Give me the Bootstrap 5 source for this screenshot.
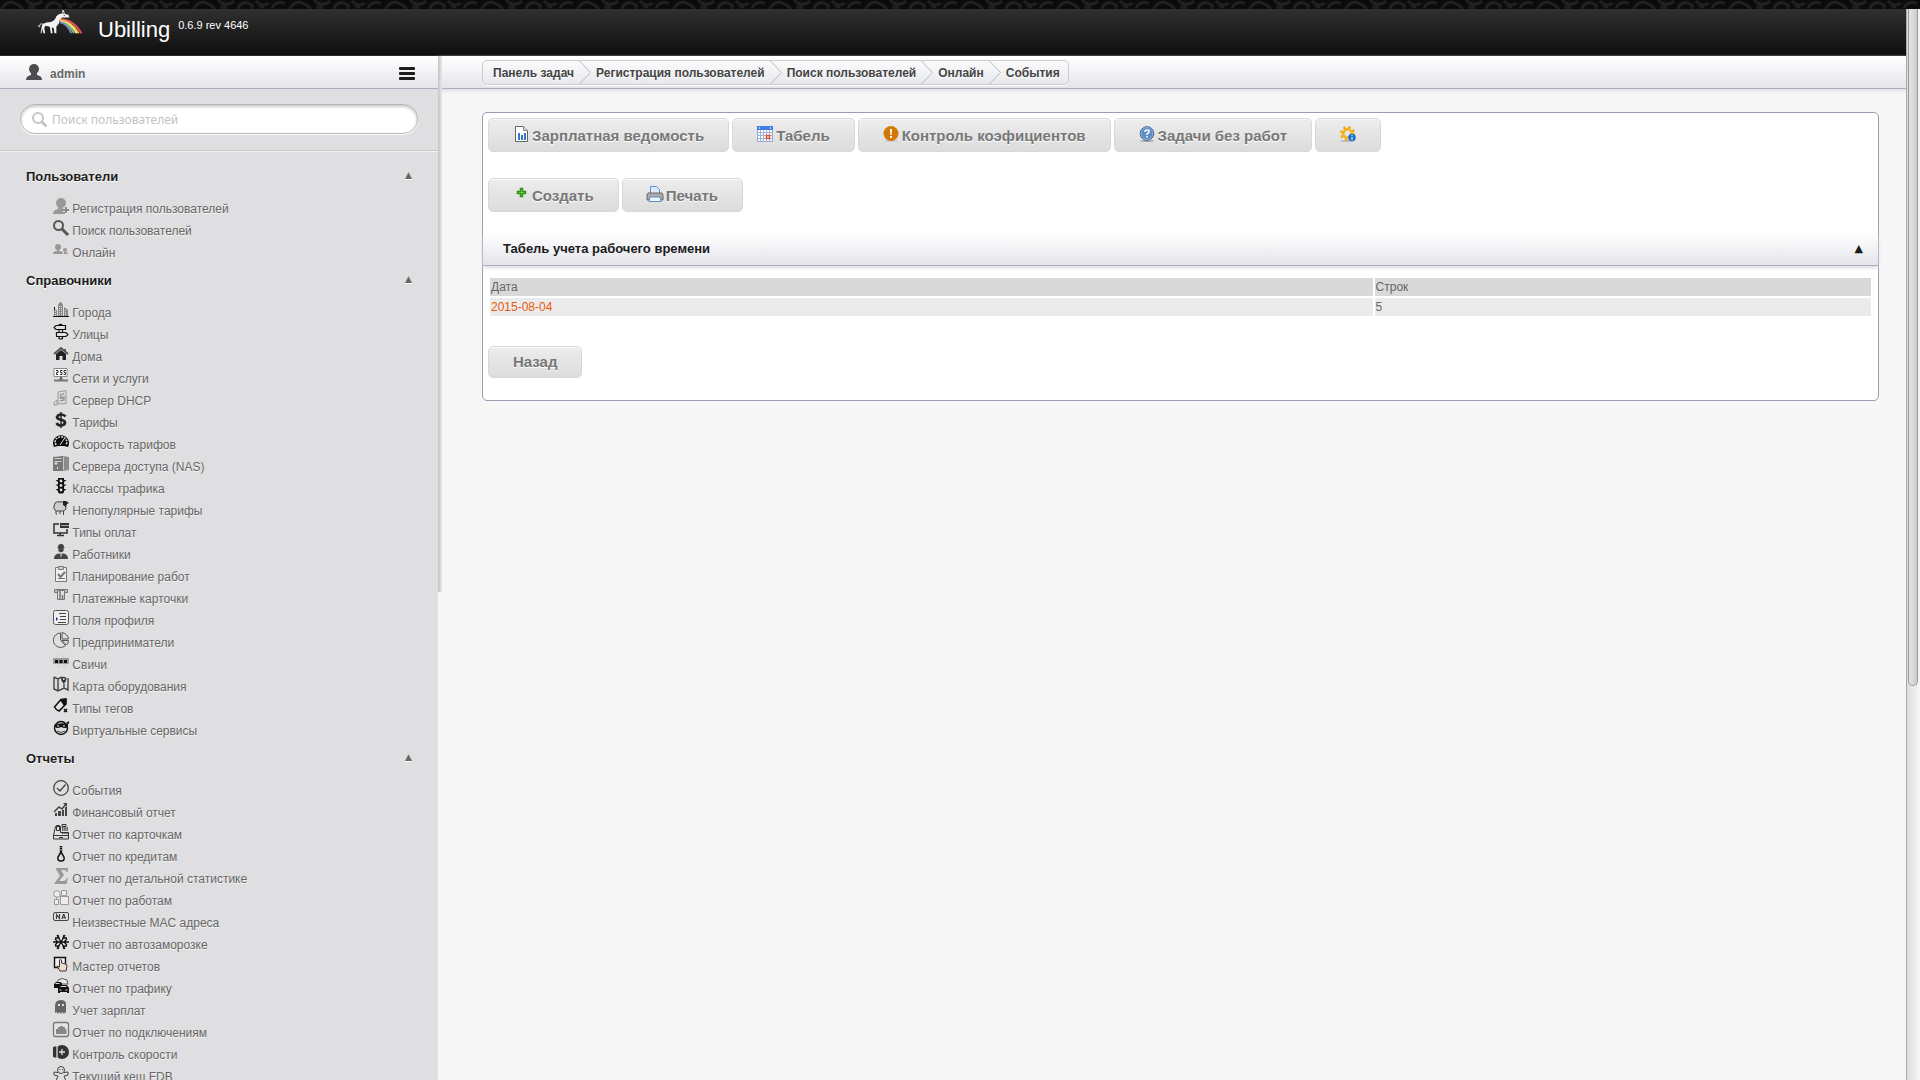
<!DOCTYPE html>
<html lang="ru">
<head>
<meta charset="utf-8">
<meta name="viewport" content="width=device-width, initial-scale=1">
<title>Ubilling</title>
<link href="https://cdn.jsdelivr.net/npm/bootstrap@5.3.0/dist/css/bootstrap.min.css" rel="stylesheet">
<style>
body{font-family:"Liberation Sans",Arial,sans-serif;font-size:12px;line-height:16px;color:#666;background:#f7f7f7}
a{text-decoration:none}
.shell{height:100vh;overflow:hidden}
.shell-body{min-height:0}
.damask{height:9px;background:#0b0b0b;flex:none}
.damask svg{display:block;width:100%;height:9px}
.brandbar{height:47px;background:linear-gradient(#303030,#0e0e0e);border-bottom:1px solid #2c2828;padding:1px 0 0 36px;flex:none}
.brandbar .unicorn{width:50px;height:26px}
.brandname{color:#fff;font-size:22px;line-height:24px}
.ver{color:#fff;font-size:11px;line-height:14px}
.strip{height:33px;background:linear-gradient(#fff,#e4e5eb);border-bottom:1px solid #a9adbd}
.side{width:438px;flex:none;background:#dfdfe1;position:relative;z-index:2}
.side-edge{position:absolute;left:438px;top:0;width:4px;height:536px;background:linear-gradient(90deg,#c2c2c4,#e9e9ea)}
.side-user{padding:3px 23px 0 26px}
.side-user a{font-size:12px;font-weight:bold;color:#666;text-shadow:0 1px 0 #fff}
.menu-btn{border:0;background:none;padding:0;width:16px;height:14px}
.menu-btn svg{display:block}
.finder{padding:15px 20px 16px;border-bottom:1px solid #c8c8ca;box-shadow:0 1px 0 #f2f2f3}
.finder-box{height:30px;border:1px solid #b4b4b6;border-radius:15px;background:#fff;box-shadow:inset 0 2px 3px #ccc,0 1px 0 #fff;padding:0 10px}
.finder-box input{border:0;outline:0;background:none;padding:0;margin-left:5px;font:12px "Noto Sans",sans-serif}
.finder-box input::placeholder{color:#c3c3c3;opacity:1}
.navgroup{padding:9px 26px 0}
.navgroup:first-child{padding-top:18px}
.navgroup h2{font-size:13px;line-height:16px;font-weight:bold;color:#1c1c1c;margin:0;text-shadow:0 1px 0 #fff}
.navgroup h2 + ul{padding:13px 0 0 27px}
.tri{font-size:9px;line-height:12px;color:#666;font-family:"DejaVu Sans",sans-serif}
.navgroup li{height:22px;line-height:22px;white-space:nowrap}
.navgroup li a{color:#666;text-shadow:0 1px 0 #f4f4f4}
.ic{width:16px;height:16px;vertical-align:-1px;overflow:visible}
.stage{min-width:0}
.stage > .strip{padding:4px 0 0 44px;box-shadow:0 2px 4px #dcdce2}
.trail{height:25px;width:max-content;border:1px solid #ccc;border-radius:5px;box-shadow:0 1px 0 #fff;padding:0 8px 0 10px}
.trail a{color:#444;font-weight:bold;text-shadow:0 1px 0 #fff}
.trail svg{width:12px;height:23px;margin:0 5px}
.panel{margin:23px 27px 0 44px;background:#fff;border:1px solid #989db0;border-radius:5px;padding:5px 0 22px}
.tools{padding:0 5px;gap:3px}
.tools-next{margin-top:26px}
.wbtn{height:34px;border:1px solid #d8d8d8;border-radius:5px;background:linear-gradient(#ededed,#dcdcdc);box-shadow:inset 0 1px 0 #fafafa;color:#777;font-size:15px;line-height:20px;font-weight:bold;padding:2px 24px 0;text-shadow:0 1px 0 #fff;white-space:nowrap}
.wbtn:hover{color:#555}
.wbtn .ic{margin-right:3px}
.wbtn.solo .ic{margin:0}
.wbtn.low{height:32px;padding-top:0}
.section-head{height:33px;margin-top:21px;padding:0 15px 0 20px;background:linear-gradient(#fff,#e4e5eb);border-bottom:1px solid #a9adbd;box-shadow:0 2px 4px #dcdce2}
.section-head h1{font-size:13px;line-height:16px;font-weight:bold;color:#1c1c1c;margin:0}
.section-head .tri{color:#1c1c1c;font-size:11px}
.sheet{width:calc(100% - 10px);margin:10px 5px 28px;border-collapse:separate;border-spacing:2px}
.sheet th,.sheet td{height:18px;line-height:16px;padding:1px;font-weight:normal}
.sheet th{background:#d9d9d9}
.sheet td{background:#ebebeb}
.sheet .date-col{width:64%}
.sheet a{color:#e8590c}
.rail{width:14px;flex:none;border-left:1px solid #aaa;background:linear-gradient(90deg,#ddd,#f6f6f6);padding:0 2px 0 1px}
.rail-thumb{height:677px;border:1px solid #999;border-top:0;border-radius:0 0 5px 5px;background:linear-gradient(90deg,#e4e4e4,#ccc)}
</style>
<script src="https://cdn.jsdelivr.net/npm/bootstrap@5.3.0/dist/js/bootstrap.bundle.min.js"></script>
</head>
<body>
<div class="shell d-flex flex-column">
<div class="damask"><svg aria-hidden="true"><defs><pattern id="dm" width="96" height="9" patternUnits="userSpaceOnUse"><g fill="none" stroke="#202020" stroke-width="3"><path d="M2 9Q6 0 14 3T22 9M26 0Q34 8 42 1M46 9q2-7 9-6t5 6M64 1q6 7 13 2M80 8q3-7 13-5"/><circle cx="32" cy="6" r="2"/><circle cx="70" cy="6" r="1"/></g></pattern></defs><rect width="100%" height="9" fill="url(#dm)"/></svg></div>
<div class="d-flex flex-fill shell-body">
<div class="d-flex flex-column flex-fill stage">
<header class="brandbar d-flex align-items-start">
<svg class="unicorn" viewBox="0 0 50 28" aria-hidden="true"><g fill="none" stroke-width="2"><path d="M24 10Q38 10 47 25" stroke="#e8505a"/><path d="M24 11Q36 12 44 25" stroke="#f3b24f"/><path d="M24 12Q35 13 42 25" stroke="#f4ec78"/><path d="M24 13Q34 14 39 25" stroke="#78c47a"/><path d="M24 13Q32 15 36 25" stroke="#8a7fd0"/></g><path d="M5 15q4-2 9-2 4-1 6-6 3-4 8-3l5 1 1 3-4 0-4 0q-3 2-3 6l-3 4 0 7h-2l-1-6-2 0 1 6h-2l-1-7-5-1-1 3 1 5H6l-1-5-1 5H3l1-6z" fill="#f2f2f2"/><path d="M27 4l0-4 2 4M5 15q-3-1-3 3l-2-1M21 8q-2-1 1-2t3-2" stroke="#eee" stroke-width="1" fill="none"/><path d="M28 6h1" stroke="#222"/></svg>
<div class="d-flex pt-1 ms-2"><span class="brandname pt-1 ms-1">Ubilling</span><span class="ver ms-1 ps-1 pt-1">0.6.9 rev 4646</span></div>
</header>
<div class="d-flex flex-fill shell-body">
<aside class="side">
<div class="side-edge"></div>
<div class="strip side-user d-flex align-items-center justify-content-between">
<a href="#" class="d-flex align-items-center"><svg width="16" height="16" viewBox="0 0 16 16" fill="#4d4d4d" class="me-2 mb-1" aria-hidden="true"><circle cx="8" cy="5" r="5"/><path d="M5 8h6v3q5 1 5 5H0q0-4 5-5z"/></svg>admin</a>
<button class="menu-btn" type="button" aria-label="Меню"><svg width="16" height="14" fill="#1d1d1d"><rect width="16" height="3" rx="1"/><rect y="5" width="16" height="3" rx="1"/><rect y="10" width="16" height="3" rx="1"/></svg></button>
</div>
<form class="finder"><div class="finder-box d-flex align-items-center"><svg width="16" height="16" fill="none" stroke="#c4c4c4" stroke-width="2" aria-hidden="true"><circle cx="7" cy="7" r="5"/><path d="M10.500 10.500l5 5" stroke-width="3"/></svg><input class="flex-fill" type="text" placeholder="Поиск пользователей" aria-label="Поиск пользователей"></div></form>
<nav>
<section class="navgroup">
<h2 class="d-flex justify-content-between">Пользователи<span class="tri">▲</span></h2>
<ul class="list-unstyled mb-0">
<li><a href="#"><svg class="ic" viewBox="0 0 16 16" fill="#999"><circle cx="8" cy="5" r="5"/><path d="M5 8h5v3h2q2 2 2 5H0q0-4 5-5z"/><path d="M10 11h2V9h3v2h1v3h-1v2h-3v-2h-2z" fill="#eee"/><path d="M13 9v6M10 12h6" stroke="#888" stroke-width="2"/></svg> Регистрация пользователей</a></li>
<li><a href="#"><svg class="ic" viewBox="0 0 16 16" fill="none" stroke="#555"><circle cx="5.500" cy="5.500" r="4.500" stroke-width="2"/><path d="M9 9l6 6" stroke-width="3"/></svg> Поиск пользователей</a></li>
<li><a href="#"><svg class="ic" viewBox="0 0 16 16" fill="#999"><circle cx="5" cy="5" r="3"/><path d="M4 7h2v2q4 0 4 3H0q0-3 4-3z"/><circle cx="12" cy="8" r="2"/><path d="M11 12q-1-2 1-2 3 0 3 2z"/></svg> Онлайн</a></li>
</ul></section>
<section class="navgroup">
<h2 class="d-flex justify-content-between">Справочники<span class="tri">▲</span></h2>
<ul class="list-unstyled mb-0">
<li><a href="#"><svg class="ic" viewBox="0 0 16 16"><path d="M1 14V8h3v6M5 14V3l2-3h1l2 3v11M11 14V5l4 3v6" fill="#888"/><path d="M6.500 4v10M8.500 4v10M2.500 9v5M12.500 8v6" stroke="#ddd" stroke-dasharray="1 1"/><path d="M0 14.500h16M1.500 5v3" stroke="#111"/></svg> Города</a></li>
<li><a href="#"><svg class="ic" viewBox="0 0 16 16" fill="none" stroke="#111"><path d="M3 1.500h9.500v4H3l-2-2zM3.500 8.500H13l2 2-2 2H3.500zM5.500 1.500q2-2 4 0M6 5.500v3M9.500 5.500v3M6 12.500v2q2 1 3.500 0v-2" stroke-width="1.200"/></svg> Улицы</a></li>
<li><a href="#"><svg class="ic" viewBox="0 0 16 16"><path d="M1 8l7-6 7 6M12 3v3" fill="none" stroke="#555" stroke-width="2"/><path d="M3 8l5-4 5 4v6h-3.500v-4h-3v4H3z" fill="#222"/></svg> Дома</a></li>
<li><a href="#"><svg class="ic" viewBox="0 0 16 16"><path d="M1 .5h13v8H1z" fill="#fff" stroke="#888"/><path d="M3 2.500h2v2H3.500v2H5M9.500 2.500h-2v2H9v2H7M13 2.500h-2v2h1.500v2h-2" fill="none" stroke="#333"/><path d="M8 9v3" stroke="#555" stroke-width="2"/><path d="M1 12.500h14M6 11.500h4" stroke="#777" stroke-width="2"/></svg> Сети и услуги</a></li>
<li><a href="#"><svg class="ic" viewBox="0 0 16 16" fill="#ddd" stroke="#999"><path d="M5 2l8-1.500v13L5 14z"/><path d="M11 3.500L7.500 5v3L11 7v3l-4 1" fill="none" stroke-width="1.500"/><path d="M1 15q-1-3 3-5v5z"/></svg> Сервер DHCP</a></li>
<li><a href="#"><svg class="ic" viewBox="0 0 16 16" fill="none" stroke="#2b2424"><path d="M12.500 4.500Q11 2.500 8 2.500t-4 2.500q0 2 4 2.800t4 3-4 2.700q-3 0-4.500-2.500" stroke-width="2.700"/><path d="M8 0v16" stroke-width="1.500"/></svg> Тарифы</a></li>
<li><a href="#"><svg class="ic" viewBox="0 0 16 16"><path d="M1 13a8 8 0 1 1 14 0l-4-1H5z" fill="#0a0a0a"/><path d="M3 11l-1-3 1-3 3-2 4 0 3 2 1 3-1 3" fill="none" stroke="#ddd" stroke-width="1.500" stroke-dasharray="2 1"/><path d="M7 11l4-6" stroke="#ddd"/></svg> Скорость тарифов</a></li>
<li><a href="#"><svg class="ic" viewBox="0 0 16 16"><path d="M0 1l10-1v15L0 15z" fill="#777"/><path d="M10 0l6 1v13l-6 1z" fill="#8c8c8c"/><path d="M1.500 2.500h7M1.500 5.500h7M10.500 1v13" stroke="#ccc"/><path d="M1.500 7.500h3M4 12h1" stroke="#ddd" stroke-width="2"/></svg> Сервера доступа (NAS)</a></li>
<li><a href="#"><svg class="ic" viewBox="0 0 16 16"><path d="M5 0h6v14l-1 1.500H6L5 14z" fill="#111"/><path d="M2.500 2H5v2zM2.500 6.500H5v2zM2.500 11H5v2zM13.500 2H11v2zM13.500 6.500H11v2zM13.500 11H11v2z" fill="#111"/><circle cx="8" cy="3" r="1.400" fill="#ddd"/><circle cx="8" cy="7.500" r="1.400" fill="#ddd"/><circle cx="8" cy="12" r="1.400" fill="#ddd"/></svg> Классы трафика</a></li>
<li><a href="#"><svg class="ic" viewBox="0 0 16 16"><path d="M2 3q2-2 5-1 3-1 5 1l1 6-2 2H3Q0 9 1 6z" fill="#ccc" stroke="#444"/><path d="M3 11v3h1M7 11v3M10.500 11v4" stroke="#444" fill="none"/><path d="M10 1l3 0 3 2-2 1-1 3-3-2z" fill="#222"/></svg> Непопулярные тарифы</a></li>
<li><a href="#"><svg class="ic" viewBox="0 0 16 16"><path d="M6 2H1v9h13V7" fill="none" stroke="#333" stroke-width="1.500"/><path d="M7 1h9v5H7z" fill="#333"/><path d="M8 3.500h8" stroke="#aaa"/><path d="M7 11v2M4 13.500h7" stroke="#333" stroke-width="1.500"/></svg> Типы оплат</a></li>
<li><a href="#"><svg class="ic" viewBox="0 0 16 16" fill="#444"><path d="M5 3q0-3 3-3t3 3l1 1H4z"/><circle cx="8" cy="5.500" r="2.700"/><path d="M1 15q0-5 5-5.500h4q5 .5 5 5.500z"/><path d="M7 9.500h2L8 14z" fill="#ccc"/></svg> Работники</a></li>
<li><a href="#"><svg class="ic" viewBox="0 0 16 16" fill="#eee" stroke="#777"><path d="M2.500 1.500h11v14h-11z"/><path d="M5.500.5h5v3h-5z" fill="#ccc"/><path d="M5 8l2.500 3L12 6" fill="none" stroke-width="2"/><path d="M5 12.500h7" stroke-width="1"/></svg> Планирование работ</a></li>
<li><a href="#"><svg class="ic" viewBox="0 0 16 16"><path d="M1.500 1.500h13v3h-13z" fill="#bbb" stroke="#777"/><path d="M4.500 2.500h7v9h-7z" fill="#ddd" stroke="#777"/><path d="M7 3v8M9.500 7v4" stroke="#777" stroke-width="1.500"/></svg> Платежные карточки</a></li>
<li><a href="#"><svg class="ic" viewBox="0 0 16 16"><rect x=".5" y=".5" width="15" height="14" rx="2" fill="#eee" stroke="#555"/><path d="M6 3.500h7M7 6.500h6M7 9.500h6M5 12.500h8" stroke="#444"/><path d="M3 7v4l2-2z" fill="#22a"/></svg> Поля профиля</a></li>
<li><a href="#"><svg class="ic" viewBox="0 0 16 16" fill="none" stroke="#555"><path d="M7.500 1a7.200 7.200 0 1 0 5 12.500L7.500 8z"/><path d="M9 .5V7h6.500Q15 2 9 .5zM9 8.500h6.500q0 3-2 4.500z"/></svg> Предприниматели</a></li>
<li><a href="#"><svg class="ic" viewBox="0 0 16 16"><path d="M3 3l3-2M9 3l3-2M4 13l3-2M10 13l3-2" stroke="#ccc"/><rect y="4" width="16" height="6" rx="1" fill="#999"/><path d="M2 6h3v3H2zM6.500 6h3v3h-3zM11 6h3v3h-3z" fill="#111"/></svg> Свичи</a></li>
<li><a href="#"><svg class="ic" viewBox="0 0 16 16"><path d="M.8 1L5 3l4-2M15 2v12l-4-2-6 3-4-2V1M5 3v11M11 8v4" fill="none" stroke="#444" stroke-width="1.400"/><path d="M8 3a2.800 2.800 0 0 1 5.500 0q0 2-2.700 5Q8 5 8 3z" fill="#333"/><circle cx="10.800" cy="3" r="1" fill="#ddd"/></svg> Карта оборудования</a></li>
<li><a href="#"><svg class="ic" viewBox="0 0 16 16"><path d="M1.500 9L8 1.500l5-.5v5L6 13q-3-1-4.500-4z" fill="#e4e4e6" stroke="#111" stroke-width="1.600"/><path d="M7 2l6-1v5l-2 2z" fill="#111"/><path d="M11 11l3 3M14 11l-3 3" stroke="#111" stroke-width="1.500"/></svg> Типы тегов</a></li>
<li><a href="#"><svg class="ic" viewBox="0 0 16 16"><circle cx="8" cy="8" r="6.500" fill="#ddd" stroke="#111" stroke-width="1.400"/><path d="M1 5q7-3 14-1v3q-3 2-7 0-4 2-6 0zM13 3l3-2v3z" fill="#111"/><path d="M4 6h2M10 6h2" stroke="#eee"/><path d="M4 11q4 3 8 0" fill="none" stroke="#444"/></svg> Виртуальные сервисы</a></li>
</ul></section>
<section class="navgroup">
<h2 class="d-flex justify-content-between">Отчеты<span class="tri">▲</span></h2>
<ul class="list-unstyled mb-0">
<li><a href="#"><svg class="ic" viewBox="0 0 16 16" fill="none" stroke="#444"><circle cx="8" cy="8" r="7.300" stroke-width="1.300"/><path d="M4 8l3 3 5.500-6.500" stroke-width="1.300"/></svg> События</a></li>
<li><a href="#"><svg class="ic" viewBox="0 0 16 16"><path d="M2 11h2v3H2zM5 9h3v5H5zM9 8h2v6H9zM12 5h2v9h-2z" fill="#444"/><path d="M1 10l5-5 3 2 4-5" fill="none" stroke="#444" stroke-width="1.500"/><path d="M10 1h4v4z" fill="#444"/></svg> Финансовый отчет</a></li>
<li><a href="#"><svg class="ic" viewBox="0 0 16 16" fill="none" stroke="#333"><path d="M.5 11.500v3.500h15v-3.500zM.5 11.500l2-9h5v6h8v3M3.500 1.500h3v5h-3zM9 .5h4v2H9zM6 13.500h4"/><path d="M9 4h6M9 6h6M9 9h6" stroke-width="1.500" stroke-dasharray="1.500 .7"/></svg> Отчет по карточкам</a></li>
<li><a href="#"><svg class="ic" viewBox="0 0 16 16" fill="none" stroke="#111"><path d="M8 0v6" stroke-width="2.500" stroke-dasharray="1.500 .6"/><path d="M8 6l-3 5q-1 4 3 4t3-4z" stroke-width="1.500"/></svg> Отчет по кредитам</a></li>
<li><a href="#"><svg class="ic" viewBox="0 0 16 16" fill="#999"><path d="M3 0h12l-.5 4h-1Q13 2 11 2H8l3 5-5 6h4q3 0 4-3h1l-1.500 6H1.500v-1L7 8 3 1z"/></svg> Отчет по детальной статистике</a></li>
<li><a href="#"><svg class="ic" viewBox="0 0 16 16" fill="#eee" stroke="#999"><circle cx="4" cy="4" r="3.300"/><path d="M8.500.5h5v5h-5zM7.500 6.500h8v8h-8zM1.500 9.500h4v5h-4zM3.500 7v2"/></svg> Отчет по работам</a></li>
<li><a href="#"><svg class="ic" viewBox="0 0 16 16" fill="none" stroke="#444"><rect x=".5" y=".5" width="15" height="8" rx="1.500"/><path d="M3.500 7V2.500L6.500 6.500V2M9 7l1.500-4.500h.500L12.500 7M9.500 5.500h3" stroke-width="1.200"/></svg> Неизвестные MAC адреса</a></li>
<li><a href="#"><svg class="ic" viewBox="0 0 16 16" fill="none" stroke="#111" stroke-width="1.300"><path d="M0 8h16M4 1l8 14M12 1L4 15M2 5l3 3-3 3M14 5l-3 3 3 3M5 1l1 3-4 0M11 1l-1 3 4 0M5 15l1-3-4 0M11 15l-1-3 4 0"/></svg> Отчет по автозаморозке</a></li>
<li><a href="#"><svg class="ic" viewBox="0 0 16 16"><path d="M1.500 1.500h11v10h-11z" fill="#eee" stroke="#111" stroke-width="1.400"/><path d="M6.500 4q1-1 2 0v3l4.500 1 1 2-1 5H7l-3-5 2.500 1z" fill="#ebdccb" stroke="#433"/></svg> Мастер отчетов</a></li>
<li><a href="#"><svg class="ic" viewBox="0 0 16 16"><path d="M5 2q4-3 9 0l1 4H4z" fill="#e8e8e8" stroke="#555"/><path d="M1 6l2-2h5l1 2v4H1zM5 10l2-3h7l2 3v5h-2v-1H7v1H5z" fill="#111"/><path d="M7.500 8.500h6M2.500 5.500h4M6.500 12h2M12.500 12h2" stroke="#ddd"/></svg> Отчет по трафику</a></li>
<li><a href="#"><svg class="ic" viewBox="0 0 16 16"><path d="M2 13V6q0-6 6-6t5 6v7l-1-1-1 2-1.500-2L8 14l-1.500-2L5 14l-1.500-2z" fill="#666"/><path d="M5 4h2v2H5zM9 4h2v2H9z" fill="#ddd"/></svg> Учет зарплат</a></li>
<li><a href="#"><svg class="ic" viewBox="0 0 16 16"><rect x=".5" y=".5" width="15" height="14" rx="2" fill="#e4e4e4" stroke="#777" stroke-width="1.300"/><path d="M3 12V7h2V5h2V4h3v1h2v2h1.500v5z" fill="#888"/></svg> Отчет по подключениям</a></li>
<li><a href="#"><svg class="ic" viewBox="0 0 16 16"><circle cx="9" cy="8" r="7" fill="#333"/><path d="M0 3l4-1v12l-4-1z" fill="#333"/><path d="M4 2v12M9 5v6M6 8h6" stroke="#ddd" stroke-width="1.300"/></svg> Контроль скорости</a></li>
<li><a href="#"><svg class="ic" viewBox="0 0 16 16" fill="none" stroke="#444"><circle cx="8" cy="4" r="3.500"/><path d="M5 6.500L1 6v3l4 1-2 5M11 6.500l4-.5v3l-4 1 2 5M6.500 3.500h1M9 3.500h1"/></svg> Текущий кеш FDB</a></li>
</ul></section>
</nav>
</aside>
<main class="stage flex-fill">
<div class="strip"><nav class="trail d-flex align-items-center" aria-label="Навигация">
<a href="#">Панель задач</a><svg viewBox="0 0 12 23" fill="none" stroke="#bbb"><path d="M.5 0L11.500 11.500.5 23"/></svg><a href="#">Регистрация пользователей</a><svg viewBox="0 0 12 23" fill="none" stroke="#bbb"><path d="M.5 0L11.500 11.500.5 23"/></svg><a href="#">Поиск пользователей</a><svg viewBox="0 0 12 23" fill="none" stroke="#bbb"><path d="M.5 0L11.500 11.500.5 23"/></svg><a href="#">Онлайн</a><svg viewBox="0 0 12 23" fill="none" stroke="#bbb"><path d="M.5 0L11.500 11.500.5 23"/></svg><a href="#">События</a></nav></div>
<div class="panel">
<div class="tools d-flex">
<a href="#" class="wbtn d-flex align-items-center"><svg class="ic mb-1" viewBox="0 0 16 16"><path d="M2.500.5h8l4 4v11h-12z" fill="#fff" stroke="#666"/><path d="M10.500.5v4h4" fill="#ddd" stroke="#888"/><path d="M5 7h2v7H5zM8 9h2v5H8zM11 7h2v7h-2z" fill="#3478cf"/></svg>Зарплатная ведомость</a>
<a href="#" class="wbtn d-flex align-items-center"><svg class="ic mb-1" viewBox="0 0 16 16"><path d="M.5.5h15v15H.5z" fill="#fff" stroke="#8aa4d8"/><path d="M0 0h16v4H0z" fill="#3f7de8"/><path d="M2 1v2l1.500-1zM14 1v2l-1.500-1z" fill="#fff"/><path d="M3.500 4v12M6.500 4v12M9.500 4v12M12.500 4v12M0 6.500h16M0 9.500h16M0 12.500h16" stroke="#9fb2d8"/><path d="M9.500 9.500h3v3h-3z" fill="#fff" stroke="#e0522e" stroke-width="1.500"/></svg>Табель</a>
<a href="#" class="wbtn d-flex align-items-center"><svg class="ic mb-1" viewBox="0 0 16 16"><ellipse cx="8" cy="15" rx="7" ry="1" fill="#ccc"/><circle cx="8" cy="7.500" r="7.500" fill="#d27808"/><path d="M7 3h2l-.4 6H7.400zM7 10h2v2H7z" fill="#fff"/></svg>Контроль коэфициентов</a>
<a href="#" class="wbtn d-flex align-items-center"><svg class="ic mb-1" viewBox="0 0 16 16"><ellipse cx="8" cy="15" rx="7" ry="1" fill="#aaa"/><circle cx="8" cy="7.500" r="6.800" fill="#5b8cc6" stroke="#3b6296"/><circle cx="8" cy="7.500" r="5.900" fill="none" stroke="#a9c6e8" stroke-width=".7"/><path d="M6 6q0-2 2-2t2 1.500-2 2.500V9M8 10v1.500" fill="none" stroke="#fff" stroke-width="1.600"/></svg>Задачи без работ</a>
<a href="#" class="wbtn solo d-flex align-items-center" aria-label="Настройки"><svg class="ic mb-1" viewBox="0 0 16 16"><ellipse cx="7" cy="15" rx="7" ry="1" fill="#bbb"/><circle cx="7.500" cy="7.500" r="6" fill="none" stroke="#f3a712" stroke-width="3" stroke-dasharray="2.400 2.300"/><circle cx="7.500" cy="7.500" r="4.200" fill="none" stroke="#f8b21c" stroke-width="2.500"/><circle cx="12" cy="11.500" r="3.800" fill="#1b74c4"/><path d="M12 9v1M12 11v3" stroke="#fff"/></svg></a>
</div>
<div class="tools tools-next d-flex">
<a href="#" class="wbtn d-flex align-items-center"><svg class="ic mb-1" viewBox="0 0 16 16"><path d="M7.500 2.500h2v3h3v2h-3v3h-2v-3h-3v-2h3z" fill="#9bf05a" stroke="#2f8f1a" stroke-width="1.500"/></svg>Создать</a>
<a href="#" class="wbtn d-flex align-items-center"><svg class="ic mb-1" viewBox="0 0 16 16"><path d="M3.500 7V.5h6l3 3V7" fill="#dcebfb" stroke="#5b8fd0"/><path d="M1 7h14l1 2v5H0V9z" fill="#aaa" stroke="#666"/><path d="M3 11h10l1 4.500H2z" fill="#eef5fd" stroke="#5b8fd0"/></svg>Печать</a>
</div>
<div class="section-head d-flex align-items-center justify-content-between"><h1>Табель учета рабочего времени</h1><span class="tri">▲</span></div>
<table class="sheet"><colgroup><col class="date-col"><col></colgroup><thead><tr><th scope="col">Дата</th><th scope="col">Строк</th></tr></thead><tbody><tr><td><a href="#">2015-08-04</a></td><td>5</td></tr></tbody></table>
<div class="tools d-flex"><a href="#" class="wbtn low d-flex align-items-center">Назад</a></div>
</div>
</main>
</div>
</div>
<div class="rail" aria-hidden="true"><div class="rail-thumb"></div></div>
</div>
</div>
</body>
</html>
